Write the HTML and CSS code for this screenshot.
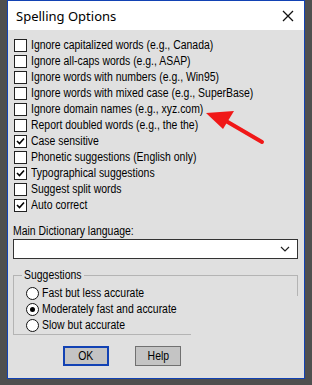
FILE: index.html
```html
<!DOCTYPE html>
<html lang="en">
<head>
  <meta charset="UTF-8">
  <title>Spelling Options</title>
  <link rel="stylesheet" href="styles.css">
</head>
<body>
  <div class="window">
    <div class="titlebar">
      <span class="title">Spelling Options</span>
      <svg class="close" width="12" height="12" viewBox="0 0 12 12">
        <path d="M1 1 L11 11 M11 1 L1 11" stroke="#111" stroke-width="1.3" fill="none"/>
      </svg>
    </div>

    <div class="content">
      <div class="checks">
        <label class="row"><span class="box"></span><span class="txt">Ignore capitalized words (e.g., Canada)</span></label>
        <label class="row"><span class="box"></span><span class="txt">Ignore all-caps words (e.g., ASAP)</span></label>
        <label class="row"><span class="box"></span><span class="txt">Ignore words with numbers (e.g., Win95)</span></label>
        <label class="row"><span class="box"></span><span class="txt">Ignore words with mixed case (e.g., SuperBase)</span></label>
        <label class="row"><span class="box"></span><span class="txt">Ignore domain names (e.g., xyz.com)</span></label>
        <label class="row"><span class="box"></span><span class="txt">Report doubled words (e.g., the the)</span></label>
        <label class="row"><span class="box"><svg width="11" height="11" viewBox="0 0 11 11"><path d="M2 5 L4.5 7.5 L9 2.5" stroke="#000" stroke-width="1.6" fill="none"/></svg></span><span class="txt">Case sensitive</span></label>
        <label class="row"><span class="box"></span><span class="txt">Phonetic suggestions (English only)</span></label>
        <label class="row"><span class="box"><svg width="11" height="11" viewBox="0 0 11 11"><path d="M2 5 L4.5 7.5 L9 2.5" stroke="#000" stroke-width="1.6" fill="none"/></svg></span><span class="txt">Typographical suggestions</span></label>
        <label class="row"><span class="box"></span><span class="txt">Suggest split words</span></label>
        <label class="row"><span class="box"><svg width="11" height="11" viewBox="0 0 11 11"><path d="M2 5 L4.5 7.5 L9 2.5" stroke="#000" stroke-width="1.6" fill="none"/></svg></span><span class="txt">Auto correct</span></label>
      </div>

      <div class="dict-label"><span class="txt">Main Dictionary language:</span></div>
      <div class="select">
        <svg width="10" height="6" viewBox="0 0 10 6"><path d="M1 1 L5 5 L9 1" stroke="#222" stroke-width="1.2" fill="none"/></svg>
      </div>

      <div class="group">
        <div class="mask"></div>
        <span class="legend"><span class="txt">Suggestions</span></span>
        <label class="radio-row"><span class="radio"></span><span class="txt">Fast but less accurate</span></label>
        <label class="radio-row"><span class="radio on"></span><span class="txt">Moderately fast and accurate</span></label>
        <label class="radio-row"><span class="radio"></span><span class="txt">Slow but accurate</span></label>
      </div>

      <div class="buttons">
        <button class="btn default"><span class="txt">OK</span></button>
        <button class="btn"><span class="txt">Help</span></button>
      </div>
    </div>
  </div>

  <!-- red annotation arrow -->
  <svg class="arrow" width="312" height="385" viewBox="0 0 312 385">
    <path d="M262 142 L226 121" stroke="#f01818" stroke-width="4" stroke-linecap="round" fill="none"/>
    <polygon points="206,113 234,111 223,129" fill="#f01818"/>
  </svg>
</body>
</html>
```

FILE: styles.css
```css
body {
  margin: 0;
  width: 312px;
  height: 385px;
  background-color: #4f4f4f;
  font-family: "Liberation Sans", Arial, sans-serif;
  font-size: 12px;
  color: #000;
  overflow: hidden;
  position: relative;
}

/* old bitmap dialog font is tall and narrow */
.txt {
  display: inline-block;
  transform: scaleX(0.87);
  transform-origin: left center;
  white-space: nowrap;
}

.window {
  margin-left: 7px;
  width: 296px;
  height: 377px;
  border: 1px solid #1242b4;
  background-color: #e0e0e0;
  display: flex;
  flex-direction: column;
}

.titlebar {
  height: 29px;
  background-color: #fff;
  display: flex;
  align-items: center;
  justify-content: space-between;
  padding: 0 10px 0 8px;
}

.title {
  font-family: "Noto Sans", "Open Sans", sans-serif;
  font-size: 13px;
  color: #000;
}

.content {
  padding: 7px 6px 0 5px;
  display: flex;
  flex-direction: column;
}

.checks {
  display: flex;
  flex-direction: column;
  padding-left: 1px;
}

.row {
  height: 16px;
  display: flex;
  align-items: center;
  gap: 4px;
  white-space: nowrap;
}

.box {
  width: 11px;
  height: 11px;
  border: 1px solid #222;
  background-color: #fff;
  display: flex;
  align-items: center;
  justify-content: center;
  flex-shrink: 0;
}

.dict-label {
  margin-top: 11px;
  height: 15px;
  line-height: 15px;
}

.select {
  height: 18px;
  border: 1px solid #333;
  background-color: #fff;
  display: flex;
  align-items: center;
  justify-content: flex-end;
  padding-right: 7px;
}

.group {
  position: relative;
  margin-top: 16px;
  border: 1px solid #b4b4b4;
  height: 49px;
  padding: 9px 0 0 12px;
  display: flex;
  flex-direction: column;
}

.legend {
  position: absolute;
  top: -8px;
  left: 8px;
  width: 58px;
  padding: 0 2px;
  background-color: #e0e0e0;
  line-height: 15px;
  white-space: nowrap;
}

.radio-row {
  position: relative;
  height: 16px;
  display: flex;
  align-items: center;
  gap: 3px;
  white-space: nowrap;
}

.radio {
  width: 11px;
  height: 11px;
  border: 1px solid #111;
  border-radius: 50%;
  background-color: #fff;
  display: flex;
  align-items: center;
  justify-content: center;
  flex-shrink: 0;
}

.radio.on::after {
  content: "";
  width: 5px;
  height: 5px;
  border-radius: 50%;
  background-color: #000;
}

/* the lower right part of the group frame is not painted */
.mask {
  position: absolute;
  left: 177px;
  top: 20px;
  right: -2px;
  bottom: -2px;
  background-color: #e0e0e0;
}

.buttons {
  margin-top: 11px;
  padding-left: 50px;
  display: flex;
  gap: 26px;
}

.btn {
  width: 46px;
  height: 20px;
  background-color: #c4c4c4;
  border: 1px solid #707070;
  font-family: "Liberation Sans", Arial, sans-serif;
  font-size: 12px;
  color: #000;
  padding: 0;
  display: flex;
  align-items: center;
  justify-content: center;
}

.btn .txt {
  transform-origin: center;
}

.btn.default {
  border: 2px solid #1242b4;
}

.arrow {
  position: absolute;
  left: 0;
  top: 0;
  pointer-events: none;
}
```
